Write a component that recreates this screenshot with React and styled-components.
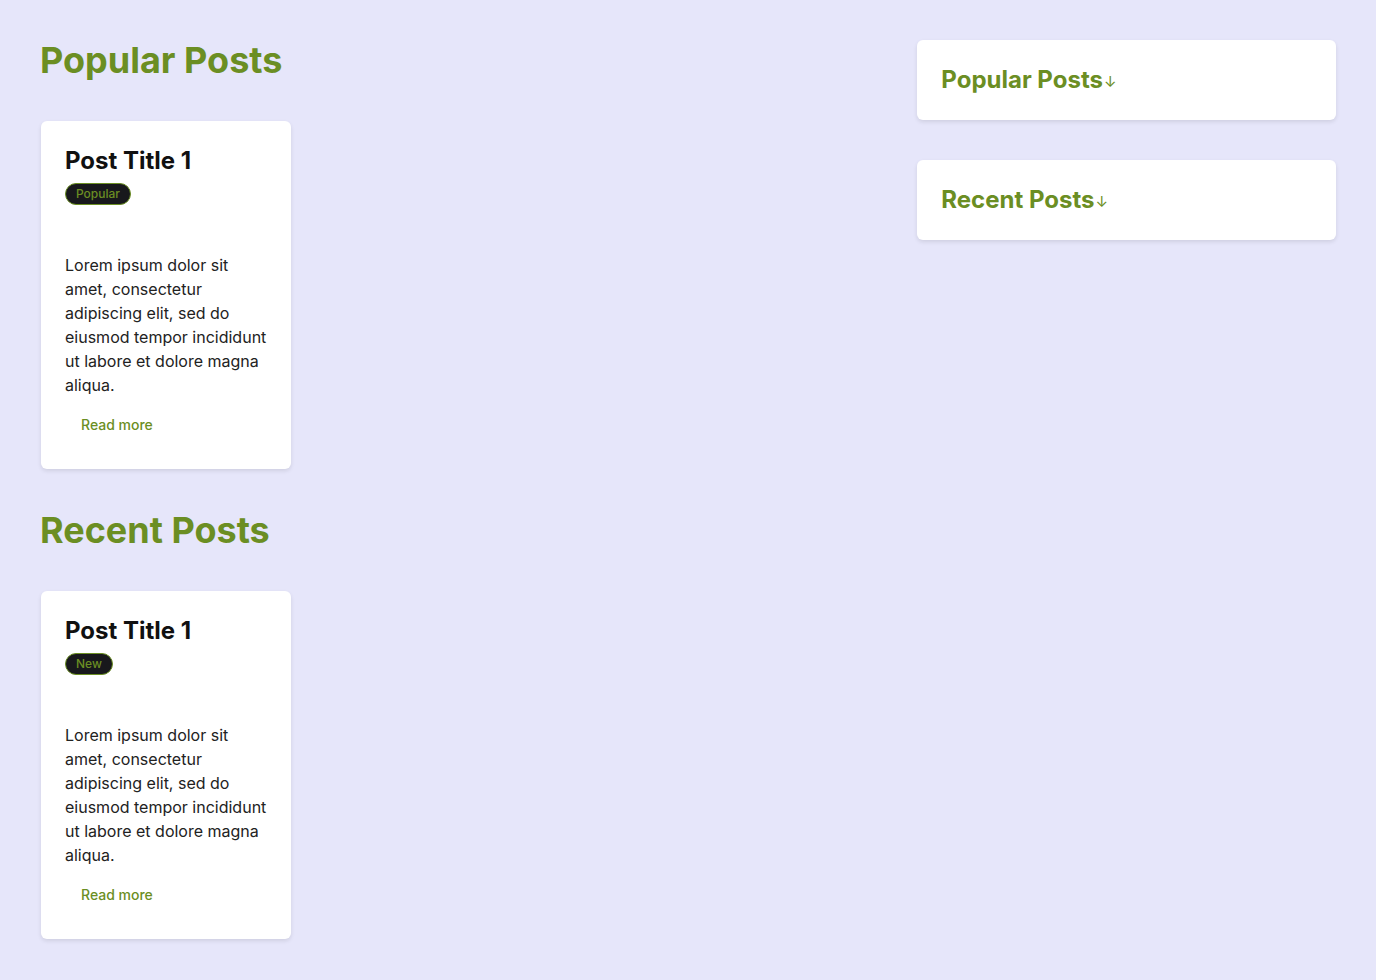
import React from 'react';
import styled, { createGlobalStyle } from 'styled-components';

const GlobalStyle = createGlobalStyle`
  body {
    margin: 0;
    background: #e6e6fa;
    font-family: Inter, "Noto Sans", sans-serif;
    color: #1a1a1a;
  }
`;

const Page = styled.div`
  display: grid;
  grid-template-columns: 2fr 1fr;
  gap: 40px;
  padding: 40px;
  align-items: start;
`;

const Main = styled.main`
  display: flex;
  flex-direction: column;
`;

const Section = styled.section`
  margin-bottom: 40px;
`;

const SectionTitle = styled.h2`
  font-size: 36px;
  font-weight: 700;
  line-height: 40px;
  color: #6b8e23;
  margin: 0 0 41px;
`;

const Card = styled.article`
  width: 250px;
  box-sizing: border-box;
  margin: 1px;
  background: #ffffff;
  border-radius: 6px;
  box-shadow: 0 2px 4px rgba(0, 0, 0, 0.1);
  padding: 25px 24px 28px;
`;

const PostTitle = styled.h3`
  font-size: 24px;
  font-weight: 700;
  line-height: 30px;
  color: #111;
  margin: 0 0 6px;
`;

const Badge = styled.span`
  display: inline-block;
  background: #18181c;
  color: #6b8e23;
  border: 1px solid #6b8e23;
  border-radius: 12px;
  font-size: 12px;
  font-weight: 500;
  line-height: 18px;
  padding: 1px 10px;
`;

const Excerpt = styled.p`
  font-size: 16px;
  line-height: 24px;
  color: #222;
  margin: 48px 0 11px;
`;

const ReadMore = styled.button`
  background: none;
  border: none;
  color: #6b8e23;
  font-family: inherit;
  font-size: 14px;
  font-weight: 500;
  padding: 8px 16px;
  cursor: pointer;
`;

const Sidebar = styled.aside`
  display: flex;
  flex-direction: column;
  gap: 40px;
`;

const Widget = styled.div`
  background: #ffffff;
  border-radius: 6px;
  box-shadow: 0 2px 4px rgba(0, 0, 0, 0.1);
  padding: 24px;
`;

const WidgetTitle = styled.h3`
  margin: 0;
  font-size: 24px;
  font-weight: 700;
  line-height: 32px;
  color: #6b8e23;
  display: flex;
  align-items: center;
`;

const Arrow = styled.span`
  font-size: 15px;
  font-weight: 400;
  margin-left: 1px;
  position: relative;
  top: 2px;
`;

const lorem =
  'Lorem ipsum dolor sit amet, consectetur adipiscing elit, sed do eiusmod tempor incididunt ut labore et dolore magna aliqua.';

const sections = [
  { id: 'popular', title: 'Popular Posts', badge: 'Popular' },
  { id: 'recent', title: 'Recent Posts', badge: 'New' },
];

const App = () => (
  <>
    <GlobalStyle />
    <Page>
      <Main>
        {sections.map((s) => (
          <Section key={s.id}>
            <SectionTitle>{s.title}</SectionTitle>
            <Card>
              <PostTitle>Post Title 1</PostTitle>
              <Badge>{s.badge}</Badge>
              <Excerpt>{lorem}</Excerpt>
              <ReadMore>Read more</ReadMore>
            </Card>
          </Section>
        ))}
      </Main>
      <Sidebar>
        {sections.map((s) => (
          <Widget key={s.id}>
            <WidgetTitle>
              {s.title}
              <Arrow>↓</Arrow>
            </WidgetTitle>
          </Widget>
        ))}
      </Sidebar>
    </Page>
  </>
);

export default App;
